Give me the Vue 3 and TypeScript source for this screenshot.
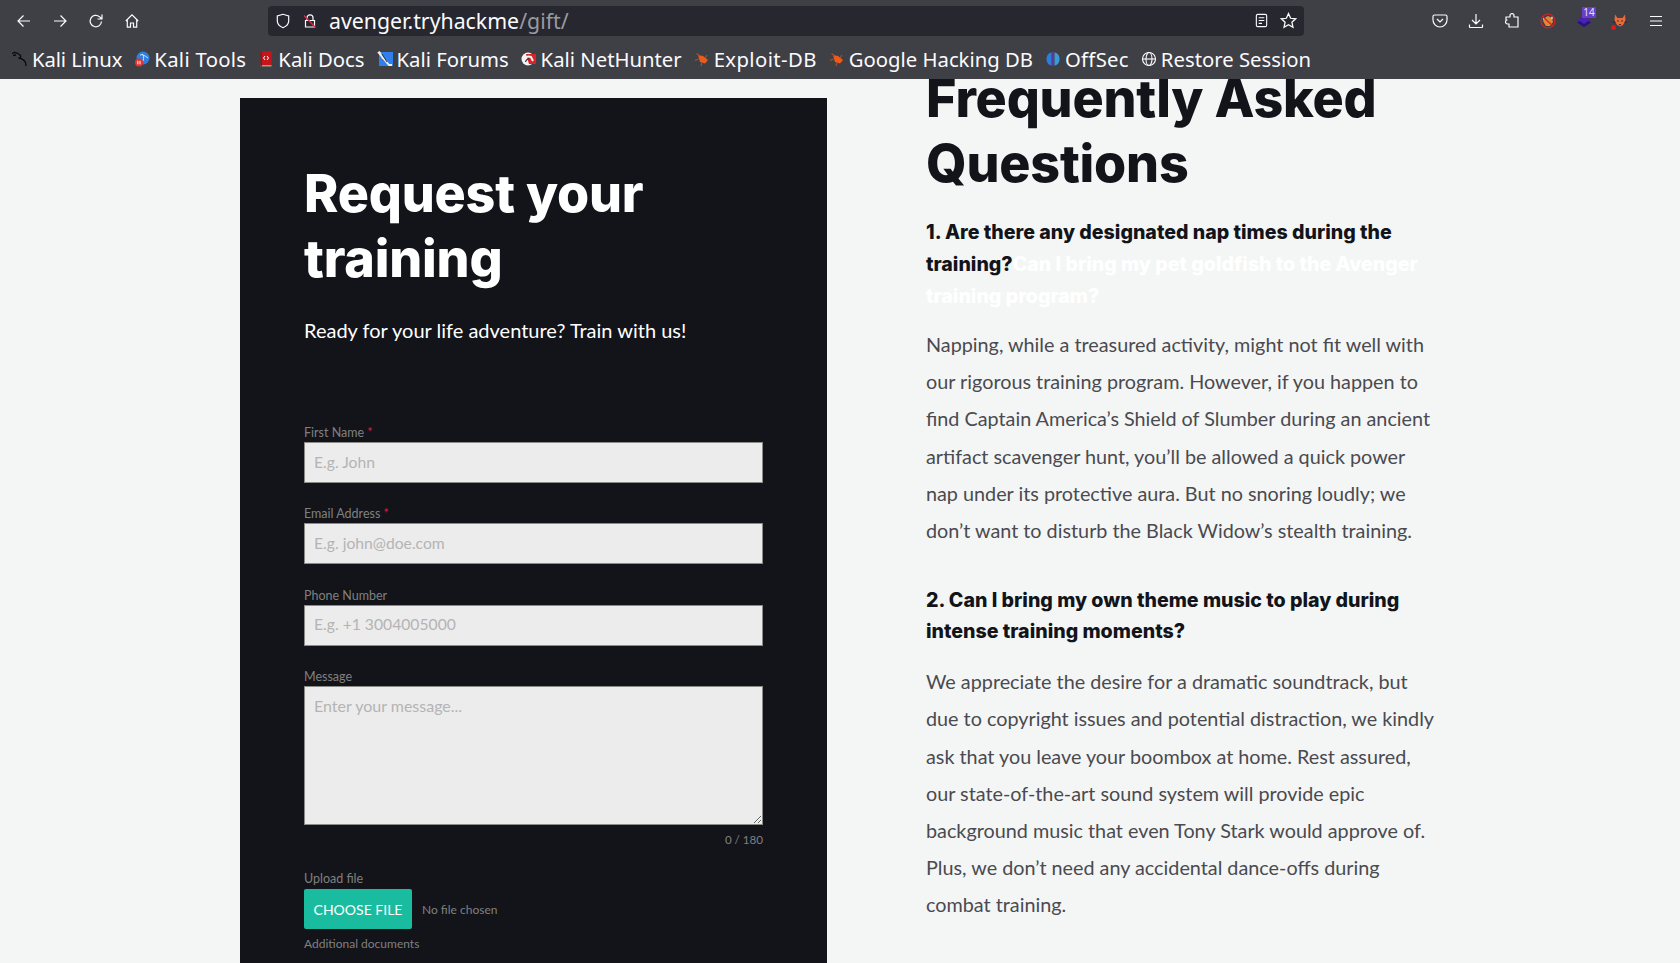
<script setup lang="ts">
interface Mark { label: string; kind: string; tweak: string }
const marks: Mark[] = [
  { label: 'Kali Linux', kind: 'kali', tweak: 'tight' },
  { label: 'Kali Tools', kind: 'tools', tweak: 'wide' },
  { label: 'Kali Docs', kind: 'docs', tweak: '' },
  { label: 'Kali Forums', kind: 'forums', tweak: '' },
  { label: 'Kali NetHunter', kind: 'hunter', tweak: '' },
  { label: 'Exploit-DB', kind: 'bug', tweak: 'wider' },
  { label: 'Google Hacking DB', kind: 'bug', tweak: '' },
  { label: 'OffSec', kind: 'off', tweak: 'wide' },
  { label: 'Restore Session', kind: 'globe', tweak: '' },
]
</script>

<template>
  <div class="window">
    <header class="chrome">
      <div class="navbar">
        <div class="navbtns">
          <svg class="ic" viewBox="0 0 16 16"><path d="M14 8H2.5M7.5 2.5 2 8l5.5 5.5" /></svg>
          <svg class="ic" viewBox="0 0 16 16"><path d="M2 8h11.500M8.500 2.500 14 8l-5.500 5.500" /></svg>
          <svg class="ic" viewBox="0 0 16 16"><path d="M13.500 8.500a5.700 5.700 0 1 1-2-4.800L13.800 6M14 1.500V6H9.500" /></svg>
          <svg class="ic" viewBox="0 0 16 16"><path d="M1.800 8 8 1.800 14.200 8M3.300 7v7.200h3.200V10h3v4.200h3.200V7" /></svg>
        </div>
        <div class="urlbar">
          <svg class="ic shield" viewBox="0 0 16 16"><path d="M8 1.300 2.300 3v5c0 3.400 3 5.600 5.700 6.700 2.700-1.100 5.700-3.300 5.700-6.700V3z" /></svg>
          <svg class="lock" viewBox="0 0 16 16">
            <path class="lock-line" d="M5 7V4.800a3 3 0 0 1 6 0V7M3.500 7.500h9v6.500h-9z" />
            <path class="lock-slash" d="M2 2.500 13.500 14.500" />
          </svg>
          <span class="url">avenger.tryhackme<span class="url-path">/gift/</span></span>
          <span class="url-end">
            <svg class="ic small" viewBox="0 0 16 16"><rect x="2.500" y="1.500" width="11" height="13" rx="1.500" /><path d="M5 5h6M5 8h6M5 11h3.500" /></svg>
            <svg class="ic star" viewBox="0 0 16 16"><path d="m8 1.500 2 4.400 4.700.5-3.500 3.200 1 4.700L8 11.900l-4.200 2.400 1-4.700-3.500-3.200 4.700-.5z" /></svg>
          </span>
        </div>
        <div class="tools">
          <svg class="ic" viewBox="0 0 16 16"><path d="M2.500 2h11A1.500 1.500 0 0 1 15 3.500V7a7 7 0 0 1-14 0V3.500A1.500 1.500 0 0 1 2.500 2zM5 6l3 3 3-3" /></svg>
          <svg class="ic" viewBox="0 0 16 16"><path d="M8 1v9.500M4 7l4 4 4-4M1.500 11.500v2.500a.5.500 0 0 0 .5.500h12a.5.500 0 0 0 .5-.5v-2.500" /></svg>
          <svg class="ic" viewBox="0 0 16 16"><path d="M6 2.700a2 2 0 0 1 4 0V4h4v10H5v-3H3.500a2 2 0 0 1 0-4H2V4h4z" /></svg>
          <svg class="ext" viewBox="0 0 16 16">
            <circle cx="8" cy="8" r="7" fill="#3f4046" stroke="#d4202a" stroke-width="1.200" />
            <path d="M3 8 6 4l2-1 4 2 1 4-3 4-4 0z" fill="#e08a30" />
            <path d="M3.500 3.500 5 6 3 7zM12 3l1 3-2-.5z" fill="#f2efe8" />
            <path d="M2.500 3.500 13 13" stroke="#d4202a" stroke-width="1.300" />
          </svg>
          <span class="stack">
            <svg class="ext" viewBox="0 0 16 16">
              <path d="m8 2.500 7 4.500-7 4.500L1 7z" fill="#4a22b0" />
              <path d="M1 9.500 8 14l7-4.500L12.500 8 8 11 3.500 8z" fill="#2a1180" />
            </svg>
            <span class="badge">14</span>
          </span>
          <span class="stack">
            <svg class="ext" viewBox="0 0 16 16">
              <path d="M3 1.500 5.500 5h5L13 1.500l.5 6L11 12l-3 1.500L5 12 2.500 7.500z" fill="#ea6a3c" />
              <path d="M5 7.500h2L6 9zM11 7.500H9l1 1.500z" fill="#2a1a14" />
              <path d="M2.500 7.500.8 9.500l2.700.5zM13.500 7.500l1.700 2-2.700.5zM6.500 11h3L8 12.500z" fill="#3a2520" />
            </svg>
            <span class="red-dot"></span>
          </span>
          <svg class="ic" viewBox="0 0 16 16"><path d="M2 3.500h12M2 8h12M2 12.500h12" /></svg>
        </div>
      </div>
      <nav class="bookmarks">
        <span v-for="m in marks" :key="m.label" class="mark" :class="m.tweak">
          <svg class="fav" viewBox="0 0 16 16">
            <template v-if="m.kind === 'kali'">
              <path d="M0 2.500c3-1.500 6-.5 8 1.500 1.500 1.500.5 3-1.500 3 3 .5 6 2 7 4.500l.5 3.500M2 1l3 1.500M1 4.500l3-.5" fill="none" stroke="#0a0a0a" stroke-width="1.300" />
            </template>
            <template v-else-if="m.kind === 'tools'">
              <circle cx="9" cy="7" r="6.500" fill="#2f7fe0" />
              <path d="M6 4c3-1 5 1 8 3M8 3c2 1 2 4 1 7" stroke="#cfe3f8" fill="none" />
              <circle cx="5" cy="11.500" r="4" fill="#e5322c" />
              <path d="M3.800 9.800v3.500M6 9.800v3.500" stroke="#fff" />
            </template>
            <template v-else-if="m.kind === 'docs'">
              <rect x="2.500" y="0.500" width="11" height="13.500" fill="#c5161d" />
              <rect x="2.500" y="14" width="11" height="1.500" fill="#a89a88" />
              <rect x="2.500" y="0.500" width="1.500" height="15" fill="#5a2a2a" />
              <path d="M7 5 5.500 7 7 9M9 5l1.500 2L9 9" stroke="#fff" fill="none" />
            </template>
            <template v-else-if="m.kind === 'forums'">
              <rect x="2" y="1" width="14" height="14" fill="#2f80ed" />
              <path d="M1 1 12 14h3M2 .5l4 7" stroke="#f0f0f0" stroke-width="1.800" fill="none" />
              <path d="M5 3l5 8" stroke="#333" fill="none" />
            </template>
            <template v-else-if="m.kind === 'hunter'">
              <circle cx="7" cy="8" r="6.500" fill="#f3f3f3" />
              <path d="M5 3h10v10H8z" fill="#d8232a" />
              <path d="M3 12a5 5 0 0 1 7-6l2 4" stroke="#f3f3f3" stroke-width="2" fill="none" />
              <path d="M4.500 11a3.500 3.500 0 0 1 4-3" stroke="#333" stroke-width="1.200" fill="none" />
            </template>
            <template v-else-if="m.kind === 'bug'">
              <path d="M4 4l5 1 5 4-3 3.500-5-1.500z" fill="#ee5a1a" />
              <path d="M1 9.500l3.500-1.500M2.500 2.500 6 5M7 15l1-3.500M13 4l-2 3" stroke="#a8502e" stroke-width="1.100" />
            </template>
            <template v-else-if="m.kind === 'off'">
              <path d="M6.500 1.500C3 2 1.500 5 1.500 8s1.500 6 5 6.500z" fill="#2b7fd8" />
              <path d="M9.500 1.500c3.500.5 5 3.500 5 6.500s-1.500 6-5 6.500z" fill="#3a9bd8" />
              <path d="M7.300 1h1.400v14H7.300z" fill="#6b35c8" />
            </template>
            <template v-else>
              <g fill="none" stroke="#fbfbfe" stroke-width="1.100">
                <circle cx="8" cy="8" r="6.500" />
                <ellipse cx="8" cy="8" rx="3" ry="6.500" />
                <path d="M1.500 8h13" />
              </g>
            </template>
          </svg>
          <span>{{ m.label }}</span>
        </span>
      </nav>
    </header>

    <main class="page">
      <section class="card">
        <h2 class="card-title">Request your training</h2>
        <p class="card-sub">Ready for your life adventure? Train with us!</p>
        <form class="form" @submit.prevent>
          <div class="field">
            <label>First Name <em>*</em></label>
            <input type="text" placeholder="E.g. John" />
          </div>
          <div class="field">
            <label>Email Address <em>*</em></label>
            <input type="text" placeholder="E.g. john@doe.com" />
          </div>
          <div class="field">
            <label>Phone Number</label>
            <input type="text" placeholder="E.g. +1 3004005000" />
          </div>
          <div class="field">
            <label>Message</label>
            <textarea placeholder="Enter your message..."></textarea>
            <div class="counter">0 / 180</div>
          </div>
          <div class="field upload">
            <label>Upload file</label>
            <div class="file-row">
              <button type="button" class="file-btn">CHOOSE FILE</button>
              <span class="file-none">No file chosen</span>
            </div>
            <div class="hint">Additional documents</div>
          </div>
        </form>
      </section>

      <section class="faq">
        <h2 class="faq-title">Frequently Asked Questions</h2>
        <h3 class="q q-first">1. Are there any designated nap times during the training?<span class="ghost">Can I bring my pet goldfish to the Avenger training program?</span></h3>
        <p class="a">Napping, while a treasured activity, might not fit well with our rigorous training program. However, if you happen to find Captain America’s Shield of Slumber during an ancient artifact scavenger hunt, you’ll be allowed a quick power nap under its protective aura. But no snoring loudly; we don’t want to disturb the Black Widow’s stealth training.</p>
        <h3 class="q">2. Can I bring my own theme music to play during intense training moments?</h3>
        <p class="a">We appreciate the desire for a dramatic soundtrack, but due to copyright issues and potential distraction, we kindly ask that you leave your boombox at home. Rest assured, our state-of-the-art sound system will provide epic background music that even Tony Stark would approve of. Plus, we don’t need any accidental dance-offs during combat training.</p>
      </section>
    </main>
  </div>
</template>

<style>
html, body { margin: 0; overflow: hidden; }
</style>

<style scoped>
.window {
  width: 1680px;
  height: 963px;
  display: flex;
  flex-direction: column;
  overflow: hidden;
  background: #f4f6f5;
  font-family: Lato, "Liberation Sans", sans-serif;
}
.chrome {
  flex: none;
  height: 79px;
  background: #3f4046;
  color: #fbfbfe;
  font-family: "Noto Sans", sans-serif;
  position: relative;
  z-index: 2;
}
.navbar {
  height: 41px;
  display: flex;
  align-items: center;
}
.navbtns {
  width: 268px;
  display: flex;
  gap: 20px;
  padding-left: 16px;
  box-sizing: border-box;
}
.ic {
  width: 16px;
  height: 16px;
  fill: none;
  stroke: #fbfbfe;
  stroke-width: 1.200;
  flex: none;
}
.urlbar {
  width: 1036px;
  height: 30px;
  background: #26272f;
  border-radius: 4px;
  display: flex;
  align-items: center;
  padding: 0 7px 0 7px;
  box-sizing: border-box;
}
.lock { width: 16px; height: 16px; margin-left: 11px; flex: none; }
.lock-line { fill: none; stroke: #fbfbfe; stroke-width: 1.200; }
.lock-slash { fill: none; stroke: #e22850; stroke-width: 1.300; }
.url { margin-left: 11px; font-size: 21.300px; color: #fbfbfe; line-height: 30px; }
.url-path { color: #9a9aa0; }
.url-end { margin-left: auto; display: flex; gap: 11px; align-items: center; }
.small { width: 15px; height: 15px; }
.star { width: 17px; height: 17px; }
.tools {
  flex: 1;
  display: flex;
  align-items: center;
  gap: 20px;
  padding-left: 128px;
}
.ext { width: 16px; height: 16px; display: block; flex: none; }
.stack { position: relative; display: block; width: 16px; height: 16px; }
.badge {
  position: absolute;
  top: -6px;
  left: 6px;
  width: 14px;
  height: 11px;
  background: #6a3fc8;
  color: #e6e0f5;
  font-size: 10px;
  line-height: 11px;
  text-align: center;
  border-radius: 1px;
}
.red-dot {
  position: absolute;
  left: -1px;
  bottom: -1px;
  width: 5px;
  height: 5px;
  border-radius: 50%;
  background: #e2171c;
}
.bookmarks {
  height: 36px;
  display: flex;
  align-items: center;
  padding-left: 12px;
  gap: 12px;
  font-size: 20.300px;
  white-space: nowrap;
}
.mark { display: flex; align-items: center; gap: 4px; }
.mark.tight { letter-spacing: -0.100px; }
.mark.wide { letter-spacing: 0.300px; }
.mark.wider { letter-spacing: 0.400px; }
.fav { width: 16px; height: 16px; flex: none; }
.page {
  flex: 1;
  min-height: 0;
  display: flex;
  align-items: flex-start;
  padding-left: 240px;
  gap: 99px;
  overflow: hidden;
}
.card {
  flex: none;
  width: 587px;
  height: 900px;
  margin-top: 19px;
  background: #12141a;
  box-sizing: border-box;
  padding: 63px 64px 0;
}
.card-title {
  margin: 0;
  width: 400px;
  color: #fff;
  font-family: Inter, sans-serif;
  font-weight: 800;
  font-size: 52px;
  line-height: 65px;
  letter-spacing: -0.2px;
}
.card-sub {
  margin: 24px 0 0;
  color: #fff;
  font-size: 20px;
  line-height: 30px;
}
.form { margin-top: 80px; }
.field { display: flex; flex-direction: column; margin-bottom: 23.400px; }
.field label {
  font-size: 12.500px;
  line-height: 16px;
  margin-bottom: 1px;
  color: #808080;
}
.field em { color: #d81f4c; font-style: normal; }
.field input,
.field textarea {
  box-sizing: border-box;
  width: 459px;
  background: #ececec;
  border: 1px solid #8a8a86;
  border-radius: 0;
  font-family: Lato, sans-serif;
  font-size: 15.700px;
  padding: 0 9px;
  margin: 0;
  outline: none;
  display: block;
}
.field input { height: 41px; padding-bottom: 2px; }
.field textarea { height: 139px; padding-top: 9px; line-height: 20px; font-size: 16px; }
.field input::placeholder,
.field textarea::placeholder { color: #b4b4b4; opacity: 1; }
.counter {
  margin-top: 8px;
  text-align: right;
  font-size: 11.600px;
  line-height: 14px;
  color: #808080;
  width: 459px;
}
.field:nth-child(4) { margin-bottom: 24px; }
.upload label { margin-bottom: 2px; }
.file-row { display: flex; align-items: center; gap: 10px; }
.file-btn {
  width: 108px;
  height: 40px;
  background: #1abc9f;
  color: #fff;
  border: 0;
  border-radius: 2px;
  padding: 0;
  font-family: Lato, sans-serif;
  font-size: 14px;
}
.file-none { font-size: 12px; color: #808080; }
.hint { margin-top: 8px; font-size: 12px; line-height: 14px; color: #808080; }
.faq {
  flex: none;
  width: 510px;
  margin-top: -13px;
}
.faq-title {
  margin: 0;
  color: #12141a;
  font-family: Inter, sans-serif;
  font-weight: 800;
  font-size: 52px;
  line-height: 65px;
  letter-spacing: -0.2px;
}
.q {
  margin: 36px 0 0;
  color: #12141a;
  font-family: Inter, sans-serif;
  font-weight: 800;
  font-size: 19.600px;
  line-height: 31px;
}
.q-first { margin-top: 20px; line-height: 32px; }
.ghost { color: #fff; }
.a {
  margin: 16px 0 0;
  color: #4a4a50;
  font-size: 19.800px;
  line-height: 37.200px;
}
.q-first + .a { margin-top: 14px; }
</style>
